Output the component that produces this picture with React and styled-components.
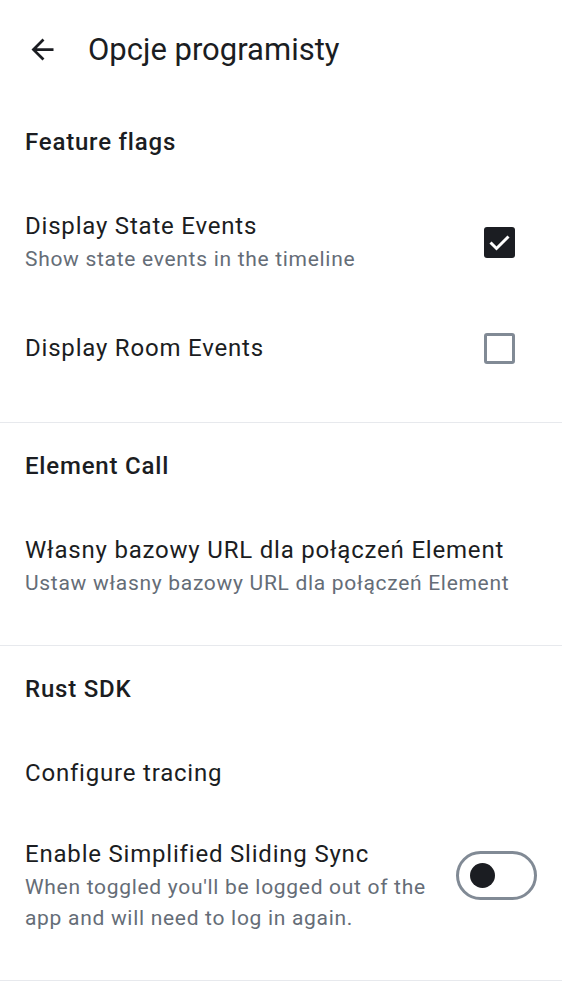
import React from "react";
import styled, { createGlobalStyle } from "styled-components";

const GlobalStyle = createGlobalStyle`
  html, body {
    margin: 0;
    padding: 0;
    background: #fff;
  }
  body {
    font-family: Roboto, "Noto Sans", "Liberation Sans", sans-serif;
    color: #1b1d22;
    -webkit-font-smoothing: antialiased;
  }
`;

const SECTIONS = [
  {
    title: "Feature flags",
    items: [
      {
        title: "Display State Events",
        subtitle: "Show state events in the timeline",
        control: "checkbox",
        checked: true,
      },
      { title: "Display Room Events", control: "checkbox", checked: false },
    ],
  },
  {
    title: "Element Call",
    items: [
      {
        title: "Własny bazowy URL dla połączeń Element",
        subtitle: "Ustaw własny bazowy URL dla połączeń Element",
      },
    ],
  },
  {
    title: "Rust SDK",
    items: [
      { title: "Configure tracing" },
      {
        title: "Enable Simplified Sliding Sync",
        subtitle: "When toggled you'll be logged out of the app and will need to log in again.",
        control: "switch",
        checked: false,
      },
    ],
  },
];

const BackArrow = () => (
  <svg width="33" height="33" viewBox="0 0 24 24" fill="#1b1d22">
    <path d="M20 11H7.83l5.59-5.59L12 4l-8 8 8 8 1.41-1.41L7.83 13H20v-2z" />
  </svg>
);

const CheckMark = () => (
  <svg width="31" height="31" viewBox="0 0 31 31" fill="none" stroke="#fff" strokeWidth="3" strokeLinecap="butt" strokeLinejoin="miter">
    <path d="M6.5 15.5l6 6L24.5 9.5" />
  </svg>
);

const Control = ({ item }) => {
  if (item.control === "checkbox") {
    return <Checkbox checked={item.checked}>{item.checked && <CheckMark />}</Checkbox>;
  }
  if (item.control === "switch") {
    return (
      <Switch>
        <Thumb />
      </Switch>
    );
  }
  return null;
};

const App = () => {
  return (
    <>
      <GlobalStyle />
      <Screen>
        <TopBar>
          <BackButton>
            <BackArrow />
          </BackButton>
          <TopTitle>Opcje programisty</TopTitle>
        </TopBar>
        {SECTIONS.map((section, i) => (
          <Section key={i}>
            <SectionTitle>{section.title}</SectionTitle>
            {section.items.map((item, j) => (
              <Row key={j} tall={item.control === "checkbox"}>
                <RowText>
                  <RowTitle>{item.title}</RowTitle>
                  {item.subtitle && <RowSubtitle>{item.subtitle}</RowSubtitle>}
                </RowText>
                <Control item={item} />
              </Row>
            ))}
          </Section>
        ))}
      </Screen>
    </>
  );
};

const Screen = styled.div`
  width: 562px;
  min-height: 1000px;
  background: #fff;
`;

const TopBar = styled.div`
  height: 99px;
  display: flex;
  align-items: center;
  padding-left: 26px;
`;

const BackButton = styled.div`
  width: 33px;
  height: 33px;
  display: flex;
  align-items: center;
  justify-content: center;
`;

const TopTitle = styled.div`
  margin-left: 29px;
  font-size: 31px;
  line-height: 36px;
  font-weight: 400;
  color: #1b1d22;
`;

const Section = styled.div`
  border-bottom: 1px solid #e7e9ed;
  padding-bottom: 23px;
`;

const SectionTitle = styled.div`
  padding: 28px 25px 29px;
  font-size: 24px;
  line-height: 30px;
  font-weight: 500;
  letter-spacing: 0.8px;
  color: #1b1d22;
`;

const Row = styled.div`
  display: flex;
  align-items: ${(p) => (p.tall ? "center" : "flex-start")};
  padding: ${(p) => (p.tall ? "23px 47px 33px 25px" : "23px 25px 23px 25px")};
  gap: 20px;
`;

const RowText = styled.div`
  flex: 1;
  min-width: 0;
`;

const RowTitle = styled.div`
  font-size: 24px;
  line-height: 35px;
  letter-spacing: 0.8px;
  color: #1b1d22;
`;

const RowSubtitle = styled.div`
  font-size: 21px;
  line-height: 31px;
  letter-spacing: 0.7px;
  color: #656d77;
`;

const Checkbox = styled.div`
  width: 31px;
  height: 31px;
  box-sizing: border-box;
  border-radius: 3px;
  flex-shrink: 0;
  display: flex;
  align-items: center;
  justify-content: center;
  background: ${(p) => (p.checked ? "#1b1d22" : "#fff")};
  border: ${(p) => (p.checked ? "none" : "3px solid #818a95")};
`;

const Switch = styled.div`
  width: 81px;
  height: 49px;
  box-sizing: border-box;
  border: 3px solid #818a95;
  border-radius: 25px;
  flex-shrink: 0;
  margin-top: 14px;
  display: flex;
  align-items: center;
  padding-left: 11px;
`;

const Thumb = styled.div`
  width: 25px;
  height: 25px;
  border-radius: 50%;
  background: #1b1d22;
`;

export default App;
